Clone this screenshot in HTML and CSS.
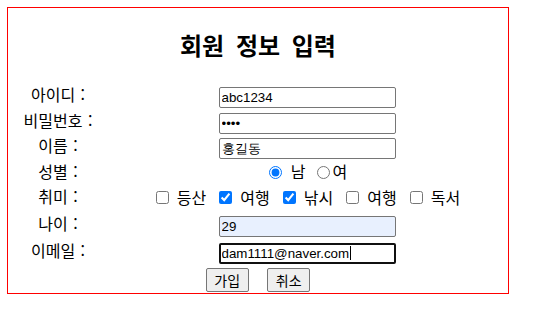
FILE: index.html
```html
<!DOCTYPE html>
<html lang="ko">

<head>
    <meta charset="UTF-8">
    <title>회원 정보 입력</title>
    <link rel="stylesheet" href="styles.css">
</head>

<body>
    <form class="join">
        <table class="joinTable">
            <tr class="titleRow">
                <th colspan="2">
                    <h2>회원 정보 입력</h2>
                </th>
            </tr>
            <tr class="h26">
                <td class="label">아이디 :</td>
                <td class="field"><input type="text" class="txt" value="abc1234"></td>
            </tr>
            <tr class="h25">
                <td class="label">비밀번호 :</td>
                <td class="field"><input type="password" class="txt" value="abcd"></td>
            </tr>
            <tr class="h26">
                <td class="label">이름 :</td>
                <td class="field"><input type="text" class="txt" value="홍길동"></td>
            </tr>
            <tr class="h25">
                <td class="label">성별 :</td>
                <td class="field">
                    <div class="gender">
                        <input type="radio" name="gender" checked><span class="male">남</span><input type="radio" name="gender"><span class="female">여</span>
                    </div>
                </td>
            </tr>
            <tr class="h26">
                <td class="label">취미 :</td>
                <td class="field">
                    <div class="hobby">
                        <label><input type="checkbox">등산</label>
                        <label><input type="checkbox" checked>여행</label>
                        <label><input type="checkbox" checked>낚시</label>
                        <label><input type="checkbox">여행</label>
                        <label><input type="checkbox">독서</label>
                    </div>
                </td>
            </tr>
            <tr class="h27">
                <td class="label">나이 :</td>
                <td class="field"><input type="text" class="txt filled" value="29"></td>
            </tr>
            <tr class="h27">
                <td class="label">이메일 :</td>
                <td class="field"><span class="caretBox"><input type="text" class="txt focus" value="dam1111@naver.com"></span></td>
            </tr>
            <tr class="h27">
                <td colspan="2" class="btns">
                    <button type="submit">가입</button>
                    <button type="reset">취소</button>
                </td>
            </tr>
        </table>
    </form>
</body>

</html>
```

FILE: styles.css
```css
* {
    margin: 0px;
    padding: 0px;
    box-sizing: border-box;
}

html,
body {
    width: 100%;
    height: 100%;
    background-color: #fff;
}

body {
    font-family: "Noto Sans CJK KR", "Liberation Sans", sans-serif;
    font-size: 16px;
    line-height: 1.2;
    color: #000;
}

.join {
    padding: 7px;
}

.joinTable {
    width: 502px;
    border: 1px solid #f00;
    border-collapse: separate;
    border-spacing: 0;
}

.joinTable td,
.joinTable th {
    padding: 0;
    vertical-align: middle;
}

.titleRow {
    height: 76px;
}

.titleRow h2 {
    font-size: 24px;
    font-weight: bold;
    word-spacing: 5px;
    text-align: center;
    padding-bottom: 2px;
}

.h25 {
    height: 25px;
}

.h26 {
    height: 26px;
}

.h27 {
    height: 27px;
}

.label {
    width: 100px;
    text-align: center;
    padding-bottom: 4px !important;
    word-spacing: 1px;
}

.field {
    text-align: center;
    padding-right: 2px !important;
}

.txt {
    width: 177px;
    height: 21px;
    padding: 1px 2px;
    border: 1px solid #767676;
    border-radius: 2px;
    font-family: "Liberation Sans", Arial, sans-serif;
    font-size: 13.33px;
    color: #000;
    background-color: #fff;
    vertical-align: middle;
    outline: none;
}

.filled {
    background-color: #e8f0fe;
}

.focus {
    border: 2px solid #101010;
    padding: 0 1px;
}

.caretBox {
    position: relative;
    display: inline-block;
    vertical-align: middle;
}

.caretBox::after {
    content: "";
    position: absolute;
    left: 131px;
    top: 4px;
    width: 1px;
    height: 14px;
    background-color: #000;
}

.gender {
    display: flex;
    justify-content: center;
    align-items: center;
    padding-left: 2px;
    padding-bottom: 3px;
}

.gender input {
    width: 13px;
    height: 13px;
    margin: 0;
}

.gender .male {
    margin: 0 11px 0 9px;
}

.gender .female {
    margin-left: 3px;
}

.hobby {
    display: flex;
    justify-content: center;
    align-items: center;
    gap: 13px;
    padding-left: 2px;
    padding-bottom: 3px;
}

.hobby label {
    display: flex;
    align-items: center;
    gap: 8px;
}

.hobby input {
    width: 13px;
    height: 13px;
    margin: 0;
}

.btns {
    text-align: center;
}

.btns button {
    width: 43px;
    height: 24px;
    margin: 0 7px;
    border: 1px solid #767676;
    border-radius: 2px;
    background-color: #efefef;
    font-family: "Noto Sans CJK KR", sans-serif;
    font-size: 14px;
    line-height: 20px;
    color: #000;
    vertical-align: middle;
}
```
